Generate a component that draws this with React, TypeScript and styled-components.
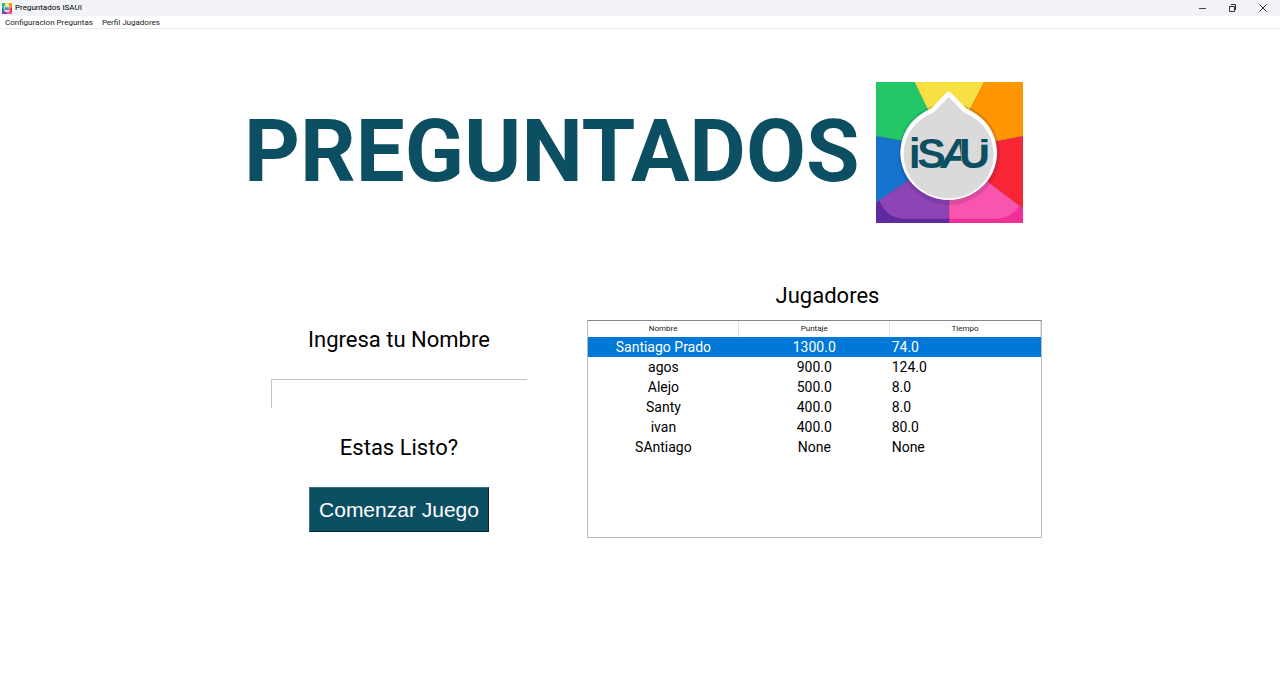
import React, { useId } from "react";
import styled, { createGlobalStyle } from "styled-components";

const GlobalStyle = createGlobalStyle`
  * { box-sizing: border-box; }
  body { margin: 0; background: #fff; color: #000; font-family: Roboto, sans-serif; }
`;

const Window = styled.div`
  display: flex;
  flex-direction: column;
  min-height: 100vh;
`;

const TitleBar = styled.header`
  display: flex;
  align-items: center;
  height: 16px;
  padding: 0 2px;
  background: #f1f3f9;
`;

const WindowTitle = styled.span`
  flex: 1;
  padding-left: 3px;
  font: 8px/14px Roboto, sans-serif;
`;

const WindowButton = styled.button`
  display: flex;
  align-items: center;
  justify-content: center;
  width: 30px;
  height: 14px;
  padding: 0;
  border: 0;
  background: transparent;
`;

const MenuBar = styled.nav`
  display: flex;
  gap: 9px;
  height: 13px;
  padding-left: 5px;
  border-bottom: 1px solid #ececec;
`;

const MenuItem = styled.a`
  color: #222;
  font: 8px/13px Roboto, sans-serif;
  text-decoration: none;
`;

const Page = styled.main`
  width: 100%;
  max-width: 804px;
  margin: 0 auto;
  padding: 53px 0 0 6px;
`;

const Hero = styled.section`
  display: flex;
  align-items: flex-start;
  gap: 17px;
  height: 199px;
`;

const Title = styled.h1`
  margin: 0;
  color: #0c4f63;
  font-size: 87px;
  font-weight: 700;
  line-height: 138px;
`;

const Columns = styled.section`
  display: flex;
  justify-content: space-between;
  padding-left: 27px;
`;

const StartForm = styled.form`
  display: flex;
  flex-direction: column;
  align-items: center;
  width: 256px;
  padding-top: 45px;
`;

const Caption = styled.label`
  font-size: 22px;
  line-height: 28px;
`;

const NameInput = styled.input`
  width: 100%;
  height: 29px;
  margin: 25px 0 26px;
  padding: 0 4px;
  border: solid #c4c4c4;
  border-width: 1px 0 0 1px;
  border-radius: 0;
  outline: 0;
  font: 22px Roboto, sans-serif;
`;

const StartButton = styled.button`
  height: 45px;
  margin-top: 25px;
  padding: 0 9px;
  border: 1px solid;
  border-color: #3b7282 #06242d #06242d #3b7282;
  background: #0c4f63;
  color: #fff;
  font: 21px "Liberation Sans", sans-serif;
  white-space: nowrap;
`;

const Ranking = styled.div`
  width: 455px;
`;

const RankingTitle = styled.h2`
  margin: 0;
  padding: 1px 0 10px 26px;
  font-size: 22px;
  font-weight: 400;
  line-height: 28px;
  text-align: center;
`;

const TableFrame = styled.div`
  min-height: 218px;
  border: 1px solid #bcbcbc;
  border-top-color: #828790;
`;

const Table = styled.table`
  width: 100%;
  table-layout: fixed;
  border-collapse: collapse;
`;

const HeadCell = styled.th`
  height: 16px;
  padding: 0;
  border-right: 1px solid #e2e2e2;
  color: #222;
  font: 8px/14px Roboto, sans-serif;
`;

const Row = styled.tr<{ $selected: boolean }>`
  background: ${(p) => (p.$selected ? "#0078d7" : "transparent")};
  color: ${(p) => (p.$selected ? "#fff" : "#000")};
`;

const Cell = styled.td<{ $align: "left" | "center" }>`
  height: 20px;
  padding: 0 2px;
  font-size: 14px;
  line-height: 20px;
  text-align: ${(p) => p.$align};
`;

const WheelLogo = ({ width, height }: { width: number; height: number }) => {
  const clip = useId();
  return (
    <svg width={width} height={height} viewBox="48 36 441 421" preserveAspectRatio="none" role="img" aria-label="ISAUI">
      <clipPath id={clip}>
        <path d="M200 180H304V310H200Z" />
      </clipPath>
      <path fill="#24c768" d="M48 36H164L267 248L48 197Z" />
      <path fill="#f8df42" d="M164 36H372L267 248Z" />
      <path fill="#ff9500" d="M372 36H489V197L267 240Z" />
      <path fill="#f82635" d="M489 197V414L267 248V240Z" />
      <path fill="#f02f98" d="M489 414V457H267V248Z" />
      <path fill="#612a9e" d="M267 457H48V396L267 248Z" />
      <path fill="#1674ce" d="M48 396V197L267 240V248Z" />
      <path fill="#f955ae" d="M267 248L477 405C462 432 438 444 405 444H267Z" />
      <path fill="#8e44b5" d="M267 248V444H132C94 444 74 424 57 390Z" />
      <path
        d="M164 36L267 248L372 36M48 197L267 240L489 197M48 396L267 248L489 414M267 248V457"
        fill="none"
        stroke="#000"
        strokeOpacity=".22"
        strokeWidth="2"
      />
      <circle cx="267" cy="251" r="152" fill="#1c1450" fillOpacity=".14" />
      <path fill="#fff" d="M258 69Q266 61 274 69L319 116A145 141 0 1 1 213 116Z" />
      <path fill="#dadadb" d="M266 80L309 125Q313 128 318 130A135 132 0 1 1 214 130Q219 128 223 125Z" />
      <g fill="#0c4f63" fontFamily="Liberation Sans, sans-serif" fontSize="129" fontWeight="700">
        <text x="146" y="293">i</text>
        <text x="172" y="293">S</text>
        <text x="242" y="293" fontStyle="italic" clipPath={`url(#${clip})`}>A</text>
        <text x="297" y="293">U</text>
      </g>
      <path fill="#dadadb" d="M359 216H385V223H359Z" />
    </svg>
  );
};

const players = [
  ["Santiago Prado", "1300.0", "74.0"],
  ["agos", "900.0", "124.0"],
  ["Alejo", "500.0", "8.0"],
  ["Santy", "400.0", "8.0"],
  ["ivan", "400.0", "80.0"],
  ["SAntiago", "None", "None"],
];

export default function App() {
  return (
    <>
      <GlobalStyle />
      <Window>
        <TitleBar>
          <WheelLogo width={10} height={11} />
          <WindowTitle>Preguntados ISAUI</WindowTitle>
          <WindowButton aria-label="Minimizar">
            <svg width="8" height="8" stroke="#444"><path d="M0 4.500H7" /></svg>
          </WindowButton>
          <WindowButton aria-label="Restaurar">
            <svg width="8" height="8" stroke="#333" fill="none"><path d="M.5 2.500H5.500V7.500H.5ZM2 .5H6.500V6" /></svg>
          </WindowButton>
          <WindowButton aria-label="Cerrar">
            <svg width="8" height="8" stroke="#333"><path d="M.5 .5L7.500 7.500M7.500 .5L.5 7.500" /></svg>
          </WindowButton>
        </TitleBar>
        <MenuBar>
          <MenuItem href="#preguntas">Configuracion Preguntas</MenuItem>
          <MenuItem href="#jugadores">Perfil Jugadores</MenuItem>
        </MenuBar>
        <Page>
          <Hero>
            <Title>PREGUNTADOS</Title>
            <WheelLogo width={147} height={141} />
          </Hero>
          <Columns>
            <StartForm onSubmit={(e) => e.preventDefault()}>
              <Caption htmlFor="nombre">Ingresa tu Nombre</Caption>
              <NameInput id="nombre" type="text" />
              <Caption as="span">Estas Listo?</Caption>
              <StartButton type="submit">Comenzar Juego</StartButton>
            </StartForm>
            <Ranking>
              <RankingTitle>Jugadores</RankingTitle>
              <TableFrame>
                <Table>
                  <thead>
                    <tr>
                      <HeadCell>Nombre</HeadCell>
                      <HeadCell>Puntaje</HeadCell>
                      <HeadCell>Tiempo</HeadCell>
                    </tr>
                  </thead>
                  <tbody>
                    {players.map(([name, score, time], i) => (
                      <Row key={name} $selected={i === 0}>
                        <Cell $align="center">{name}</Cell>
                        <Cell $align="center">{score}</Cell>
                        <Cell $align="left">{time}</Cell>
                      </Row>
                    ))}
                  </tbody>
                </Table>
              </TableFrame>
            </Ranking>
          </Columns>
        </Page>
      </Window>
    </>
  );
}
